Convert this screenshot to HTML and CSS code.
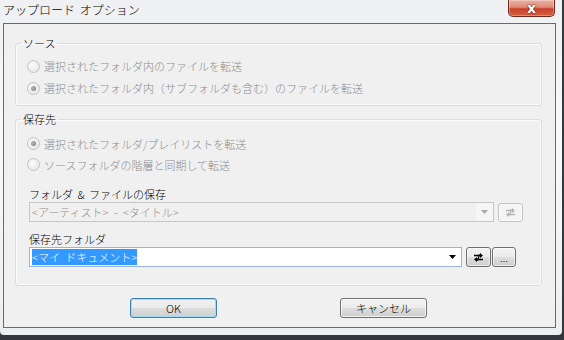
FILE: index.html
```html
<!DOCTYPE html>
<html lang="ja">

<head>
    <meta charset="UTF-8">
    <meta name="viewport" content="width=device-width, initial-scale=1.0">
    <title>アップロード オプション</title>
    <link rel="stylesheet" href="styles.css">
</head>

<body>
    <div class="window">
        <div class="titlebar">
            <span class="title">アップロード オプション</span>
            <button class="close-btn">x</button>
        </div>

        <div class="client">
            <fieldset class="group group-source">
                <legend>ソース</legend>
                <div class="radio-row"><span class="radio"></span>選択されたフォルダ内のファイルを転送</div>
                <div class="radio-row"><span class="radio checked"></span>選択されたフォルダ内（サブフォルダも含む）のファイルを転送</div>
            </fieldset>

            <fieldset class="group group-dest">
                <legend>保存先</legend>
                <div class="radio-row"><span class="radio checked"></span>選択されたフォルダ/プレイリストを転送</div>
                <div class="radio-row"><span class="radio"></span>ソースフォルダの階層と同期して転送</div>

                <div class="field-label first">フォルダ &amp; ファイルの保存</div>
                <div class="field-row">
                    <div class="combo combo-disabled">
                        <span class="combo-text">&lt;アーティスト&gt; - &lt;タイトル&gt;</span>
                        <span class="combo-drop">
                            <svg width="7" height="4" viewBox="0 0 7 4"><polygon points="0,0 7,0 3.5,4" fill="#a8a8a8"/></svg>
                        </span>
                    </div>
                    <button class="icon-btn icon-btn-disabled">
                        <svg width="11" height="11" viewBox="0 0 11 11">
                            <g fill="#b4b4b4" stroke="#b4b4b4">
                                <path d="M1 3.5h6" stroke-width="1.5" fill="none"/>
                                <path d="M7 1l3 2.5-3 2.5z" stroke="none"/>
                                <path d="M4 7.5h6" stroke-width="1.5" fill="none"/>
                                <path d="M4 5l-3 2.5 3 2.5z" stroke="none"/>
                                <path d="M6.5 2.5l-2 6" stroke-width="1.2" fill="none"/>
                            </g>
                        </svg>
                    </button>
                </div>

                <div class="field-label">保存先フォルダ</div>
                <div class="field-row">
                    <div class="combo combo-active">
                        <span class="combo-text"><span class="selected">&lt;マイ ドキュメント&gt;</span></span>
                        <span class="combo-drop">
                            <svg width="7" height="4" viewBox="0 0 7 4"><polygon points="0,0 7,0 3.5,4" fill="#000"/></svg>
                        </span>
                    </div>
                    <button class="icon-btn">
                        <svg width="11" height="11" viewBox="0 0 11 11">
                            <g fill="#000" stroke="#000">
                                <path d="M1 3.5h6" stroke-width="1.5" fill="none"/>
                                <path d="M7 1l3 2.5-3 2.5z" stroke="none"/>
                                <path d="M4 7.5h6" stroke-width="1.5" fill="none"/>
                                <path d="M4 5l-3 2.5 3 2.5z" stroke="none"/>
                                <path d="M6.5 2.5l-2 6" stroke-width="1.2" fill="none"/>
                            </g>
                        </svg>
                    </button>
                    <button class="icon-btn dots-btn">...</button>
                </div>
            </fieldset>

            <div class="actions">
                <button class="btn btn-default">OK</button>
                <button class="btn">キャンセル</button>
            </div>
        </div>
    </div>
</body>

</html>
```

FILE: styles.css
```css
/* 全体 */
* {
    margin: 0;
    padding: 0;
    box-sizing: border-box;
}

body {
    background-color: #34373b;
    font-family: 'Noto Sans CJK JP', 'Liberation Sans', sans-serif;
    font-weight: 300;
    font-size: 11px;
    color: #000;
    width: 564px;
    height: 340px;
    overflow: hidden;
}

/* ウィンドウ枠 */
.window {
    width: 562px;
    height: 335px;
    background: linear-gradient(180deg, #eef0f2 0%, #f8f9fa 40%, #eceef0 100%);
    border-radius: 0 0 4px 4px;
    display: flex;
    flex-direction: column;
}

.titlebar {
    height: 23px;
    display: flex;
    justify-content: space-between;
    align-items: flex-start;
}

.title {
    font-size: 12px;
    line-height: 20px;
    padding-left: 3px;
    word-spacing: 2px;
    color: #000;
}

.close-btn {
    width: 47px;
    height: 17px;
    margin-right: 7px;
    border: 1px solid #6e2a1e;
    border-top: none;
    border-radius: 0 0 5px 5px;
    background: linear-gradient(180deg, #ebb1a3 0%, #de8b78 45%, #c8432c 55%, #d6603f 100%);
    box-shadow: inset 0 0 0 1px rgba(255, 255, 255, 0.3);
    color: #fff;
    font-family: 'DejaVu Sans', sans-serif;
    font-weight: bold;
    font-size: 14px;
    line-height: 14px;
    text-shadow: 0 0 2px #5a1a10, 0 0 1px #5a1a10;
}

/* クライアント領域 */
.client {
    width: 553px;
    height: 305px;
    margin-left: 3px;
    border: 1px solid #6a6a6a;
    background-color: #f0f0f0;
    padding-top: 12px;
    display: flex;
    flex-direction: column;
}

/* グループボックス */
.group {
    width: 527px;
    margin-left: 11px;
    border: 1px solid #d5dfe5;
    border-radius: 3px;
    box-shadow: inset 0 0 0 1px #fafbfc;
}

.group legend {
    margin-left: 5px;
    padding: 0 2px;
    line-height: 14px;
    font-size: 11px;
}

.group-source {
    padding: 5px 0 6px;
}

.group-dest {
    margin-top: 6px;
    padding: 7px 0 18px;
}

/* ラジオボタン */
.radio-row {
    height: 22px;
    display: flex;
    align-items: center;
    color: #8d8d8d;
}

.group-dest .radio-row {
    height: 21px;
}

.radio {
    width: 13px;
    height: 13px;
    margin: 0 4px 0 11px;
    border-radius: 50%;
    border: 1px solid #c2c2c2;
    background: radial-gradient(circle at 40% 40%, #fdfdfd, #e0e0e0);
    display: flex;
    align-items: center;
    justify-content: center;
}

.radio.checked::after {
    content: '';
    width: 5px;
    height: 5px;
    border-radius: 50%;
    background: radial-gradient(circle at 40% 40%, #b8b8b8, #767676);
}

/* コンボボックス */
.field-label {
    margin: 10px 0 0 13px;
    line-height: 15px;
    word-spacing: 2px;
}

.field-label.first {
    margin-top: 12px;
}

.field-row {
    display: flex;
    align-items: center;
    height: 20px;
    margin-left: 13px;
}

.combo {
    height: 20px;
    display: flex;
    align-items: center;
    border: 1px solid #abadb3;
}

.combo-disabled {
    width: 465px;
    border-color: #c4c6c8;
    background-color: #f0f0f0;
    color: #8d8d8d;
}

.combo-active {
    width: 433px;
    border-color: #9ab5d5;
    background-color: #fff;
}

.combo-text {
    flex: 1;
    padding-left: 2px;
    line-height: 14px;
    white-space: pre;
    word-spacing: 3px;
}

.selected {
    background-color: #3399ff;
    color: #fff;
}

.combo-drop {
    width: 17px;
    height: 100%;
    display: flex;
    align-items: center;
    justify-content: center;
}

.combo-disabled .combo-drop {
    background-color: #f6f6f6;
}

/* 小さいボタン */
.icon-btn {
    width: 25px;
    height: 20px;
    margin-left: 4px;
    border: 1px solid #707070;
    border-radius: 3px;
    background: linear-gradient(180deg, #f3f3f3 0%, #ebebeb 50%, #dddddd 51%, #cfcfcf 100%);
    box-shadow: inset 0 0 0 1px rgba(255, 255, 255, 0.6);
    display: flex;
    align-items: center;
    justify-content: center;
}

.icon-btn-disabled {
    height: 19px;
    border-color: #c3c3c3;
    background: #f4f4f4;
}

.dots-btn {
    width: 24px;
    margin-left: 1px;
    font-family: 'Liberation Sans', sans-serif;
    font-size: 9px;
    line-height: 9px;
    padding-top: 5px;
}

/* OK / キャンセル */
.actions {
    display: flex;
    margin-top: 12px;
    padding-left: 126px;
    gap: 123px;
}

.btn {
    width: 87px;
    height: 20px;
    border: 1px solid #707070;
    border-radius: 3px;
    background: linear-gradient(180deg, #f2f2f2 0%, #ebebeb 50%, #dddddd 51%, #cfcfcf 100%);
    box-shadow: inset 0 0 0 1px rgba(255, 255, 255, 0.7);
    font-family: 'Noto Sans CJK JP', 'Liberation Sans', sans-serif;
    font-weight: 300;
    font-size: 11px;
    line-height: 16px;
    color: #000;
}

.btn-default {
    border-color: #3c7fb1;
    box-shadow: inset 0 0 0 1px #9fdcf6;
}
```
